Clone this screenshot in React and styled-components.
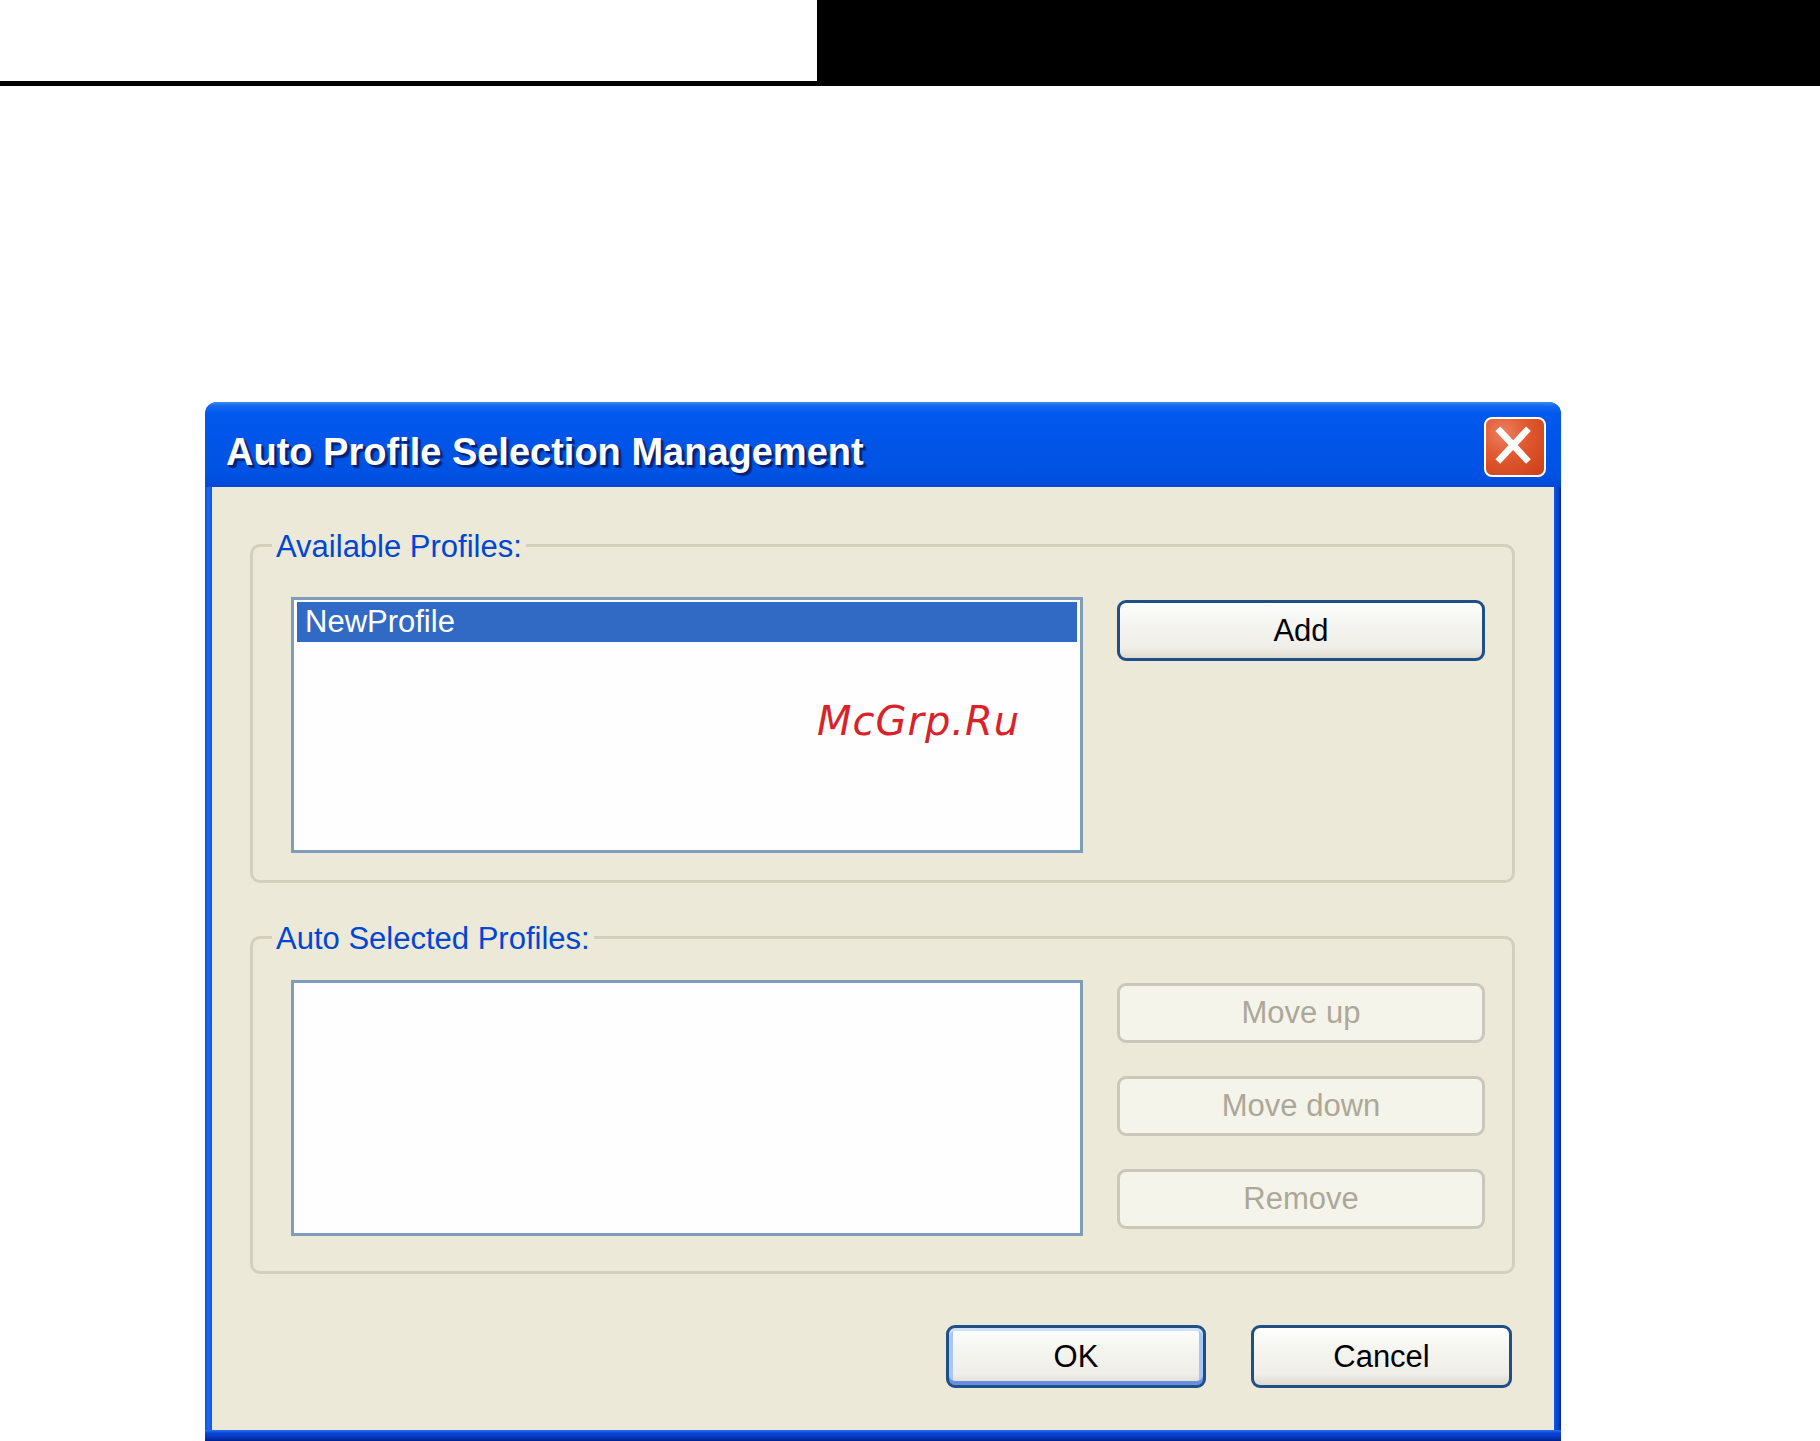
import React from 'react';
import styled, { createGlobalStyle, css } from 'styled-components';

const GlobalStyle = createGlobalStyle`
    html, body {
        margin: 0;
        padding: 0;
        background: #ffffff;
    }
    body {
        font-family: "Liberation Sans", Arial, sans-serif;
        width: 1820px;
        height: 1441px;
        overflow: hidden;
    }
`;

const Page = styled.div`
    width: 1820px;
    height: 1441px;
    display: flex;
    flex-direction: column;
`;

const Header = styled.div`
    display: flex;
    height: 86px;
`;

const HeaderBlank = styled.div`
    width: 817px;
    background: #ffffff;
    border-bottom: 5px solid #000000;
    box-sizing: border-box;
`;

const HeaderBlack = styled.div`
    flex: 1;
    background: #000000;
`;

const Window = styled.div`
    margin: 316px 0 0 205px;
    width: 1356px;
    display: flex;
    flex-direction: column;
    border-radius: 12px 12px 0 0;
    background: linear-gradient(90deg, #0a5ae6 0%, #0055ea 1%, #0055ea 99%, #0033b8 100%);
    overflow: hidden;
`;

const TitleBar = styled.div`
    height: 85px;
    display: flex;
    align-items: center;
    justify-content: space-between;
    padding: 0 15px 0 21px;
    background: linear-gradient(180deg,
        #3b8cf5 0px, #1468ef 4px, #0058ee 12px,
        #0055e8 50%, #0052e2 85%, #0048d6 100%);
`;

const Title = styled.div`
    font-family: "Liberation Sans", Arial, sans-serif;
    font-weight: bold;
    font-size: 38px;
    color: #ffffff;
    text-shadow: 2px 2px 0 #0a1f6e, 3px 3px 1px rgba(0, 20, 80, 0.6);
    margin-top: 15px;
`;

const CloseButton = styled.div`
    width: 62px;
    height: 60px;
    box-sizing: border-box;
    border: 2px solid #ffffff;
    border-radius: 8px;
    background: radial-gradient(circle at 30% 25%, #ec8060 0%, #e05a32 40%, #cc3e14 100%);
    display: flex;
    align-items: center;
    justify-content: center;
    margin-top: 4px;
`;

const Frame = styled.div`
    padding: 0 7px 0 7px;
    background: linear-gradient(90deg, #0a4fe0 0px, #1f6af0 3px, #0a5ae8 7px, #0a5ae8 calc(100% - 7px), #0040d0 calc(100% - 3px), #0028a0 100%);
`;

const Client = styled.div`
    background: #ece9d8;
    padding: 38px 42px 42px 38px;
    display: flex;
    flex-direction: column;
`;

const BottomEdge = styled.div`
    height: 11px;
    background: linear-gradient(180deg, #2c6ef0 0px, #0a48d8 3px, #0838c0 7px, #001f8c 11px);
`;

const GroupBox = styled.fieldset`
    margin: ${p => p.$top}px 0 0 0;
    width: 1265px;
    box-sizing: border-box;
    border: 3px solid #d3d0be;
    border-radius: 10px;
    padding: ${p => p.$padTop}px 27px ${p => p.$padBottom}px 38px;
    min-width: 0;
`;

const GroupLabel = styled.legend`
    margin-left: -19px;
    padding: 4px 4px 0 4px;
    height: 40px;
    box-sizing: border-box;
    font-family: "Liberation Sans", Arial, sans-serif;
    font-size: 31px;
    line-height: 36px;
    color: #0046d5;
`;

const GroupRow = styled.div`
    display: flex;
    gap: 34px;
    align-items: flex-start;
`;

const ListBox = styled.div`
    position: relative;
    width: 792px;
    height: ${p => p.$height}px;
    box-sizing: border-box;
    border: 3px solid #7f9db9;
    background: #fefefe;
    padding: 2px 3px 0 3px;
`;

const ListItem = styled.div`
    height: 40px;
    line-height: 40px;
    padding-left: 8px;
    font-size: 31px;
    font-family: "Liberation Sans", Arial, sans-serif;
    color: #ffffff;
    background: #316ac5;
`;

const Watermark = styled.div`
    position: absolute;
    left: 523px;
    top: 101px;
    font-family: "DejaVu Sans", sans-serif;
    font-style: italic;
    font-size: 40px;
    line-height: 40px;
    color: #d8232a;
    letter-spacing: 1px;
`;

const ButtonColumn = styled.div`
    display: flex;
    flex-direction: column;
    gap: 33px;
    padding-top: 3px;
`;

const PushButton = styled.div`
    width: ${p => p.$width}px;
    height: ${p => p.$height}px;
    box-sizing: border-box;
    border-radius: 9px;
    display: flex;
    align-items: center;
    justify-content: center;
    font-family: "Liberation Sans", Arial, sans-serif;
    font-size: 31px;
    ${p => p.$disabled ? css`
        border: 3px solid #cac8bb;
        background: #f5f4ea;
        color: #aca899;
    ` : css`
        border: 3px solid #1e4f86;
        background: linear-gradient(180deg, #ffffff 0%, #f6f6f2 30%, #efeee8 80%, #dedbd0 100%);
        color: #000000;
    `}
    ${p => p.$default && css`
        box-shadow: inset 0 3px 0 #cde2fd, inset 0 -4px 0 #6b8fe0, inset 4px 0 0 #a9c6f4, inset -4px 0 0 #a9c6f4;
    `}
`;

const Footer = styled.div`
    display: flex;
    justify-content: flex-end;
    gap: 45px;
    margin-top: 51px;
`;

const CloseIcon = () => (
    <svg width="62" height="60" viewBox="0 0 62 60">
        <path d="M16 15 L44 45 M44 15 L16 45" stroke="#ffffff" strokeWidth="7" strokeLinecap="square" fill="none" transform="translate(-1 -2)" />
    </svg>
);

export default function App() {
    return (
        <Page>
            <GlobalStyle />
            <Header>
                <HeaderBlank />
                <HeaderBlack />
            </Header>
            <Window>
                <TitleBar>
                    <Title>Auto Profile Selection Management</Title>
                    <CloseButton><CloseIcon /></CloseButton>
                </TitleBar>
                <Frame>
                    <Client>
                        <GroupBox $top={0} $padTop={32} $padBottom={27}>
                            <GroupLabel>Available Profiles:</GroupLabel>
                            <GroupRow>
                                <ListBox $height={256}>
                                    <ListItem>NewProfile</ListItem>
                                    <Watermark>McGrp.Ru</Watermark>
                                </ListBox>
                                <ButtonColumn>
                                    <PushButton $width={368} $height={61}>Add</PushButton>
                                </ButtonColumn>
                            </GroupRow>
                        </GroupBox>
                        <GroupBox $top={34} $padTop={23} $padBottom={35}>
                            <GroupLabel>Auto Selected Profiles:</GroupLabel>
                            <GroupRow>
                                <ListBox $height={256} />
                                <ButtonColumn>
                                    <PushButton $width={368} $height={60} $disabled>Move up</PushButton>
                                    <PushButton $width={368} $height={60} $disabled>Move down</PushButton>
                                    <PushButton $width={368} $height={60} $disabled>Remove</PushButton>
                                </ButtonColumn>
                            </GroupRow>
                        </GroupBox>
                        <Footer>
                            <PushButton $width={260} $height={63} $default>OK</PushButton>
                            <PushButton $width={261} $height={63}>Cancel</PushButton>
                        </Footer>
                    </Client>
                </Frame>
                <BottomEdge />
            </Window>
        </Page>
    );
}
